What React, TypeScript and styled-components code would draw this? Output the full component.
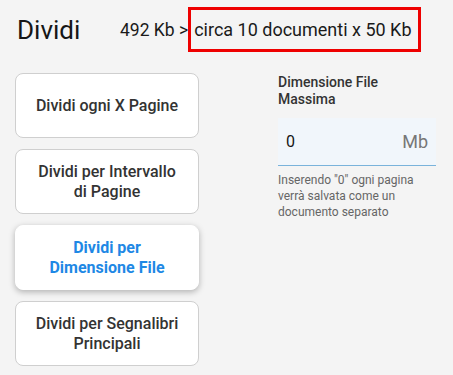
import React, { useState } from "react";
import styled, { createGlobalStyle } from "styled-components";

const GlobalStyle = createGlobalStyle`
  html, body {
    margin: 0;
    padding: 0;
    background: #f4f4f4;
    font-family: Roboto, "Liberation Sans", sans-serif;
  }
`;

const Page = styled.div`
  width: 453px;
  height: 375px;
  background: #f4f4f4;
  overflow: hidden;
`;

const Header = styled.div`
  display: flex;
  align-items: center;
  padding: 7px 0 0 17px;
  height: 45px;
`;

const Title = styled.h1`
  margin: 0;
  font-size: 26px;
  font-weight: 400;
  color: #161616;
  width: 103px;
`;

const SizeInfo = styled.span`
  font-size: 17.5px;
  color: #1a1a1a;
  white-space: nowrap;
`;

const Highlight = styled.span`
  display: inline-flex;
  align-items: center;
  height: 45px;
  box-sizing: border-box;
  border: 3px solid #ee0000;
  padding: 0 6px 0 3px;
  font-size: 18px;
  color: #1a1a1a;
  white-space: nowrap;
`;

const Main = styled.div`
  display: flex;
  gap: 79px;
  padding: 21px 0 0 15px;
`;

const ModeList = styled.div`
  display: flex;
  flex-direction: column;
  gap: 11px;
  width: 184px;
`;

const ModeButton = styled.button<{ $active?: boolean }>`
  height: 65px;
  box-sizing: border-box;
  padding: 0 16px;
  border-radius: 8px;
  background: #fff;
  border: 1px solid ${(p) => (p.$active ? "#fff" : "#cfcfcf")};
  box-shadow: ${(p) => (p.$active ? "0 2px 6px rgba(0,0,0,0.28)" : "none")};
  font-family: Roboto, "Liberation Sans", sans-serif;
  font-size: 16px;
  line-height: 20px;
  font-weight: ${(p) => (p.$active ? 700 : 500)};
  color: ${(p) => (p.$active ? "#1e88e5" : "#333")};
  text-align: center;
  cursor: pointer;
`;

const Settings = styled.div`
  width: 158px;
  display: flex;
  flex-direction: column;
  padding-top: 1px;
`;

const FieldLabel = styled.label`
  font-size: 14px;
  line-height: 17px;
  font-weight: 500;
  color: #333;
`;

const InputBox = styled.div`
  margin-top: 10px;
  height: 48px;
  box-sizing: border-box;
  display: flex;
  align-items: center;
  padding: 0 8px;
  background: #f1f6fb;
  border-bottom: 1px solid #7ab3db;
`;

const NumberInput = styled.input`
  flex: 1;
  min-width: 0;
  border: none;
  background: transparent;
  outline: none;
  padding: 0;
  font-family: Roboto, "Liberation Sans", sans-serif;
  font-size: 16px;
  color: #161616;
`;

const Unit = styled.span`
  font-size: 18px;
  color: #777;
`;

const Hint = styled.p`
  margin: 6px 0 0;
  font-size: 12px;
  line-height: 16px;
  color: #666;
`;

const modes = [
  "Dividi ogni X Pagine",
  "Dividi per Intervallo di Pagine",
  "Dividi per Dimensione File",
  "Dividi per Segnalibri Principali",
];

export default function App() {
  const [active, setActive] = useState(2);
  const [size, setSize] = useState("0");

  return (
    <Page>
      <GlobalStyle />
      <Header>
        <Title>Dividi</Title>
        <SizeInfo>492 Kb &gt;</SizeInfo>
        <Highlight>circa 10 documenti x 50 Kb</Highlight>
      </Header>
      <Main>
        <ModeList>
          {modes.map((m, i) => (
            <ModeButton key={m} $active={i === active} onClick={() => setActive(i)}>
              {m}
            </ModeButton>
          ))}
        </ModeList>
        <Settings>
          <FieldLabel>Dimensione File Massima</FieldLabel>
          <InputBox>
            <NumberInput value={size} onChange={(e) => setSize(e.target.value)} />
            <Unit>Mb</Unit>
          </InputBox>
          <Hint>Inserendo "0" ogni pagina verrà salvata come un documento separato</Hint>
        </Settings>
      </Main>
    </Page>
  );
}
